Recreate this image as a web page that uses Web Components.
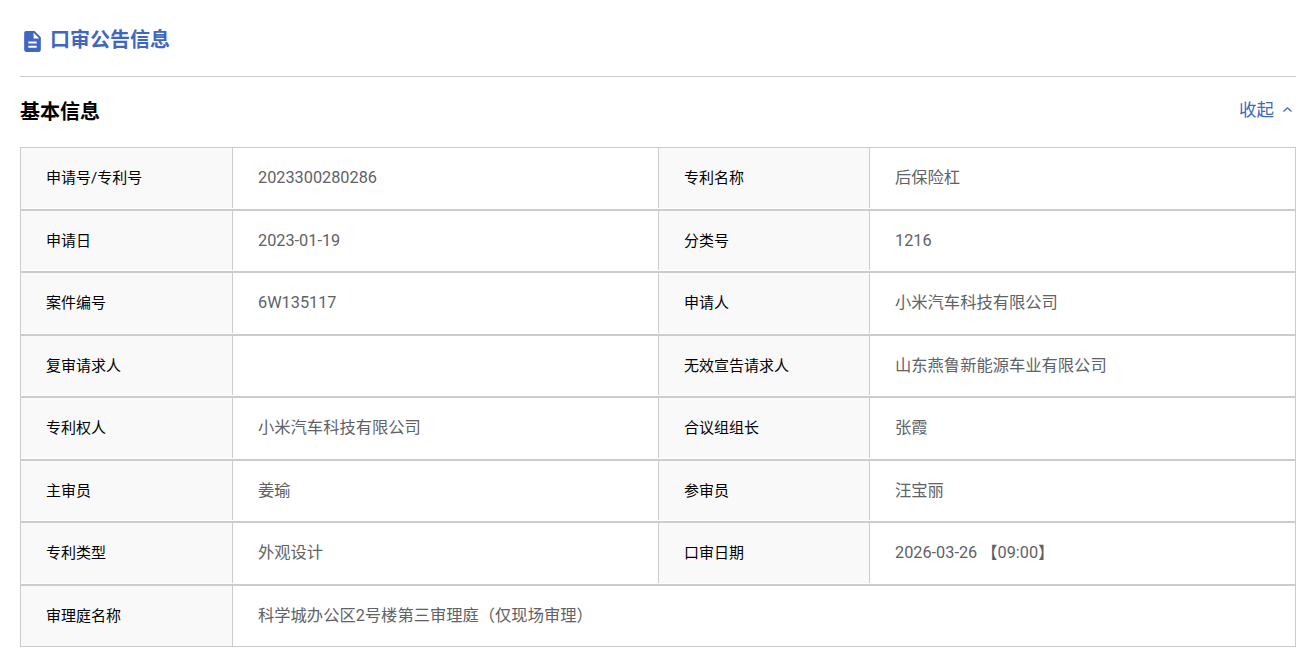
<!DOCTYPE html>
<html lang="zh">
<head>
<meta charset="utf-8">
<title>口审公告信息</title>
<style>
    html, body { margin: 0; background: #fff; }
    body { font-family: Roboto, "Noto Sans CJK SC", sans-serif; }
</style>
</head>
<body>
<notice-page>
    <page-title slot="title">口审公告信息</page-title>
    <info-section heading="基本信息">
        <info-table>
            <info-cell label="申请号/专利号">2023300280286</info-cell>
            <info-cell label="专利名称">后保险杠</info-cell>
            <info-cell label="申请日">2023-01-19</info-cell>
            <info-cell label="分类号">1216</info-cell>
            <info-cell label="案件编号">6W135117</info-cell>
            <info-cell label="申请人">小米汽车科技有限公司</info-cell>
            <info-cell label="复审请求人"></info-cell>
            <info-cell label="无效宣告请求人">山东燕鲁新能源车业有限公司</info-cell>
            <info-cell label="专利权人">小米汽车科技有限公司</info-cell>
            <info-cell label="合议组组长">张霞</info-cell>
            <info-cell label="主审员">姜瑜</info-cell>
            <info-cell label="参审员">汪宝丽</info-cell>
            <info-cell label="专利类型">外观设计</info-cell>
            <info-cell label="口审日期">2026-03-26 【09:00】</info-cell>
            <info-cell label="审理庭名称" wide>科学城办公区2号楼第三审理庭（仅现场审理）</info-cell>
        </info-table>
    </info-section>
</notice-page>

<script>
    class NoticePage extends HTMLElement {
        constructor() {
            super();
            this.attachShadow({ mode: 'open' });
            this.shadowRoot.innerHTML = `
                <style>
                    :host { display: block; padding: 0 20px; }
                </style>
                <slot name="title"></slot>
                <slot></slot>
            `;
        }
    }

    class PageTitle extends HTMLElement {
        constructor() {
            super();
            this.attachShadow({ mode: 'open' });
            this.shadowRoot.innerHTML = `
                <style>
                    :host {
                        display: flex;
                        align-items: center;
                        gap: 5px;
                        height: 77px;
                        box-sizing: border-box;
                        border-bottom: 1px solid #ccc;
                        color: #3f66c0;
                        font-size: 20px;
                        font-weight: 700;
                    }
                    svg { width: 25px; height: 25px; display: block; margin-top: 6px; }
                </style>
                <svg viewBox="0 0 24 24"><path fill="currentColor" d="M14 2H6c-1.100 0-1.990.9-1.990 2L4 20c0 1.100.89 2 1.990 2H18c1.100 0 2-.9 2-2V8l-6-6zm2 16H8v-2h8v2zm0-4H8v-2h8v2zm-3-5V3.500L18.500 9H13z"/></svg>
                <span><slot></slot></span>
            `;
        }
    }

    class InfoSection extends HTMLElement {
        constructor() {
            super();
            this.attachShadow({ mode: 'open' });
            this.shadowRoot.innerHTML = `
                <style>
                    :host { display: block; }
                    header {
                        display: flex;
                        align-items: center;
                        justify-content: space-between;
                        height: 66px;
                        padding-bottom: 4px;
                    }
                    h2 { margin: 0; font-size: 20px; font-weight: 700; color: #000; }
                    .toggle {
                        display: flex;
                        align-items: center;
                        gap: 8px;
                        padding-right: 3px;
                        margin-bottom: 3px;
                        color: #3f66c0;
                        font-size: 17.500px;
                    }
                    svg { width: 11px; height: 7px; display: block; margin-top: 2px; }
                </style>
                <header>
                    <h2></h2>
                    <span class="toggle">收起
                        <svg viewBox="0 0 11 7"><path d="M1.500 5.500 5.500 1.800l4 3.700" fill="none" stroke="currentColor" stroke-width="1.300"/></svg>
                    </span>
                </header>
                <slot></slot>
            `;
            this.shadowRoot.querySelector('h2').textContent = this.getAttribute('heading');
        }
    }

    class InfoTable extends HTMLElement {
        constructor() {
            super();
            this.attachShadow({ mode: 'open' });
            this.shadowRoot.innerHTML = `
                <style>
                    :host {
                        display: grid;
                        grid-template-columns: 638fr 636fr;
                        grid-template-rows: repeat(7, 62.500px) 61.500px;
                        border-top: 1px solid #ccc;
                        border-left: 1px solid #ccc;
                        border-right: 1px solid #ccc;
                    }
                </style>
                <slot></slot>
            `;
        }
    }

    class InfoCell extends HTMLElement {
        constructor() {
            super();
            this.attachShadow({ mode: 'open' });
            this.shadowRoot.innerHTML = `
                <style>
                    :host {
                        display: grid;
                        grid-template-columns: 212px 1fr;
                        border-bottom: 2px solid #ccc;
                        box-sizing: border-box;
                    }
                    :host(:nth-child(even)) { grid-template-columns: 211px 1fr; }
                    :host([wide]) { grid-column: 1 / -1; border-bottom-width: 1px; }
                    .label, .value {
                        display: flex;
                        align-items: center;
                        box-sizing: border-box;
                        padding: 0.500px 0 0 25px;
                        margin-bottom: 1px;
                        line-height: 24px;
                    }
                    :host([wide]) .label, :host([wide]) .value { margin-bottom: 0; }
                    .label {
                        background: #f9f9f9;
                        border-right: 1px solid #ccc;
                        color: #000;
                        font-size: 15px;
                    }
                    .value { color: #606266; font-size: 16.300px; }
                    :host(:nth-child(odd):not([wide])) .value { border-right: 1px solid #ccc; }
                </style>
                <div class="label"></div>
                <div class="value"><slot></slot></div>
            `;
            this.shadowRoot.querySelector('.label').textContent = this.getAttribute('label');
        }
    }

    customElements.define('notice-page', NoticePage);
    customElements.define('page-title', PageTitle);
    customElements.define('info-section', InfoSection);
    customElements.define('info-table', InfoTable);
    customElements.define('info-cell', InfoCell);
</script>
</body>
</html>
